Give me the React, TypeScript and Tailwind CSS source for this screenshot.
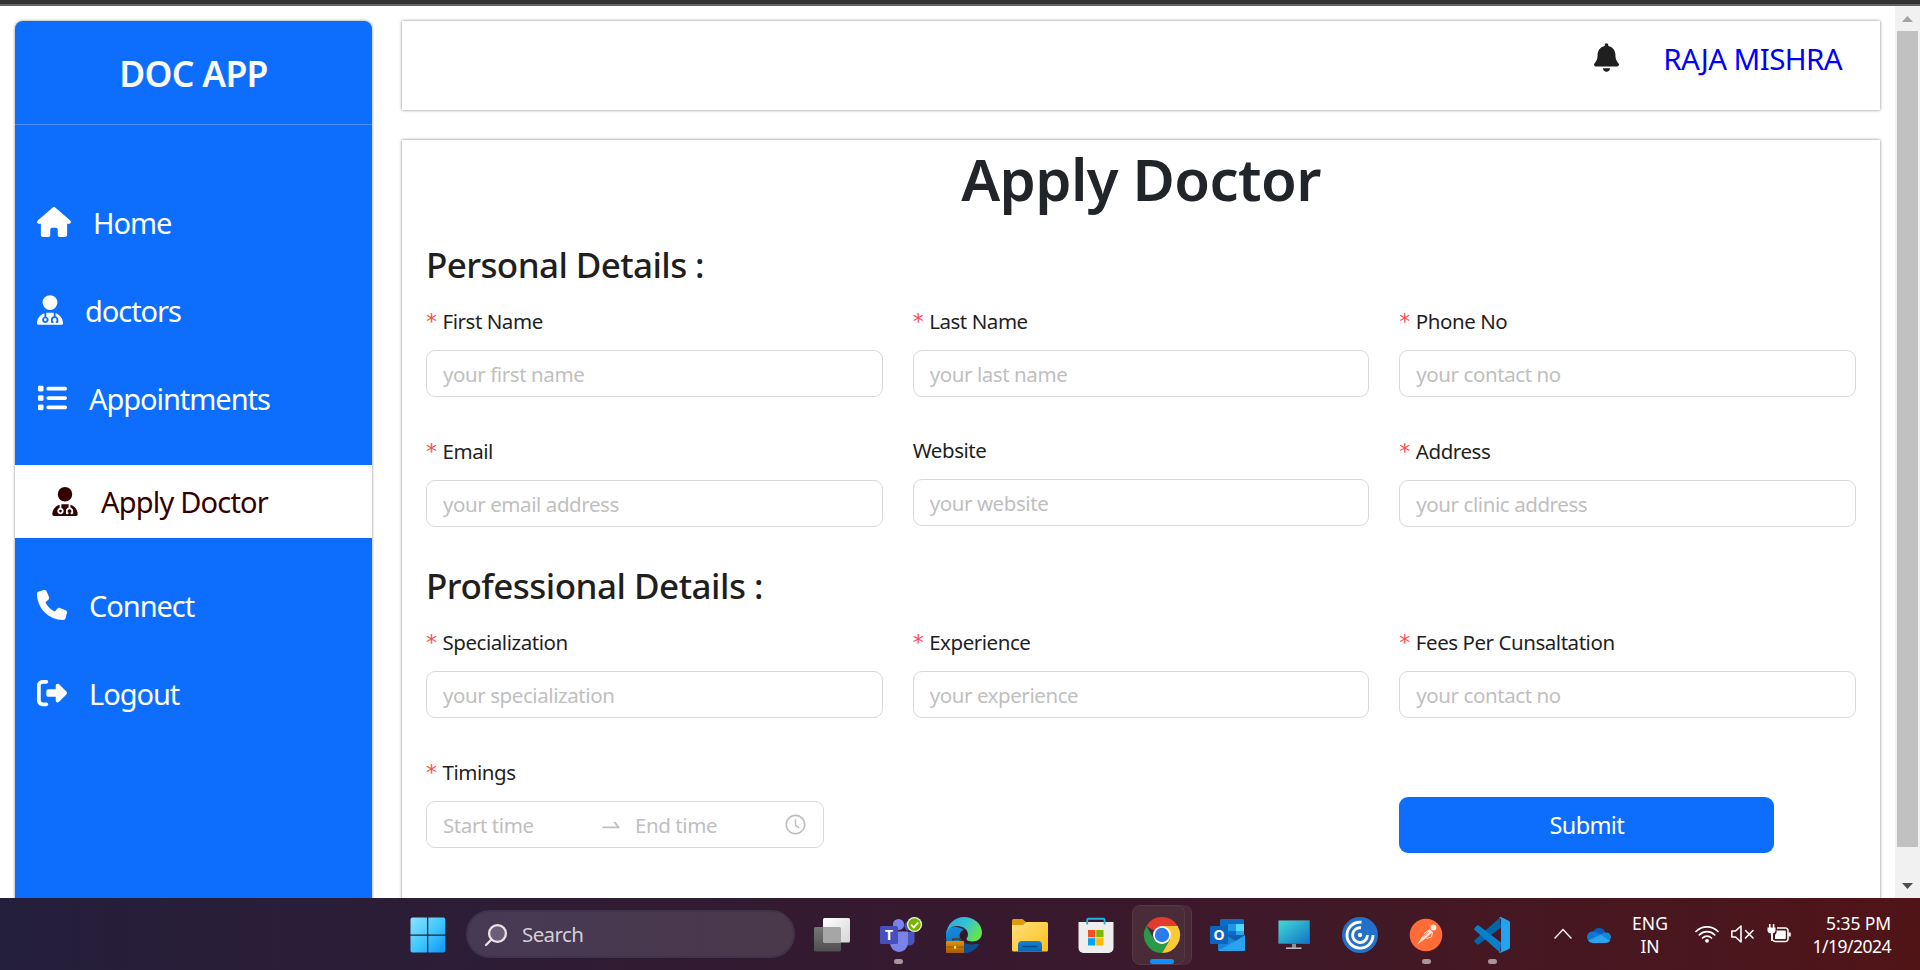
import React from "react";
import {
  FaBell,
  FaHouse,
  FaList,
  FaPhone,
  FaRightFromBracket,
  FaUserDoctor,
} from "react-icons/fa6";
import { AiOutlineClockCircle, AiOutlineSwapRight } from "react-icons/ai";

type FieldProps = { label: string; placeholder: string; required?: boolean };

function Label({ text, required = true }: { text: string; required?: boolean }) {
  return (
    <label className="flex h-[34px] items-center text-[20.5px] tracking-[-0.45px] whitespace-nowrap text-[#1f1f1f]">
      {required && (
        <span className="w-[16.5px] pt-[2px] font-['DejaVu_Sans'] text-[22px] leading-none tracking-normal text-[#ff4d4f]">
          *
        </span>
      )}
      {text}
    </label>
  );
}

function Field({ label, placeholder, required = true }: FieldProps) {
  return (
    <div className={required ? "flex flex-col gap-[12px]" : "-mt-px flex flex-col gap-[12px]"}>
      <Label text={label} required={required} />
      <input
        placeholder={placeholder}
        className="h-[47px] w-full rounded-[9px] border border-[#d9d9d9] bg-white px-[16px] text-[20.5px] tracking-[-0.42px] placeholder:text-[#bfbfbf]"
      />
    </div>
  );
}

function MenuItem({ icon, text }: { icon: React.ReactNode; text: string }) {
  return (
    <a className="flex h-[88px] items-center gap-[22px] pl-[22px] text-[29px] tracking-[-1.05px] whitespace-nowrap text-white">
      {icon}
      <span className="pt-px">{text}</span>
    </a>
  );
}

function Slot({ children, running = false }: { children: React.ReactNode; running?: boolean }) {
  return (
    <div className="relative flex h-full w-[66px] shrink-0 items-center justify-center pt-px">
      {children}
      {running && (
        <span className="absolute bottom-[6px] left-[29px] h-[5px] w-[9px] rounded-full bg-[#a8959d]" />
      )}
    </div>
  );
}

const ICON = "h-[36px] w-[36px] shrink-0 overflow-visible";

function StartIcon() {
  return (
    <svg viewBox="0 0 36 36" className={ICON}>
      <defs>
        <linearGradient id="start" x1="0" y1="0" x2="36" y2="36" gradientUnits="userSpaceOnUse">
          <stop offset="0" stopColor="#8fe3ff" />
          <stop offset="0.5" stopColor="#43c8fd" />
          <stop offset="1" stopColor="#0a92f7" />
        </linearGradient>
      </defs>
      <g fill="url(#start)">
        <path d="M2.5 .5H17v17H.5V2.5a2 2 0 0 1 2-2z" />
        <path d="M18.3 .5h15a2 2 0 0 1 2 2v15h-17z" />
        <path d="M.5 18.8H17v16.7H2.5a2 2 0 0 1-2-2z" />
        <path d="M18.3 18.8h17v14.7a2 2 0 0 1-2 2h-15z" />
      </g>
    </svg>
  );
}

function TaskViewIcon() {
  return (
    <svg viewBox="0 0 36 36" className={ICON}>
      <defs>
        <linearGradient id="tvw" x1="0" y1="0" x2="1" y2="1">
          <stop offset="0" stopColor="#ffffff" />
          <stop offset="1" stopColor="#d5d5d5" />
        </linearGradient>
        <linearGradient id="tvg" x1="0" y1="0" x2="0" y2="1">
          <stop offset="0" stopColor="#767676" />
          <stop offset="1" stopColor="#505050" />
        </linearGradient>
      </defs>
      <rect x="0" y="10" width="27" height="24.5" rx="1.5" fill="url(#tvg)" />
      <rect x="9" y="1" width="27" height="24.5" rx="1.5" fill="url(#tvw)" />
      <path d="M9 10h16.5a1.5 1.5 0 0 1 1.5 1.5V25.5H10.5a1.5 1.5 0 0 1-1.5-1.5z" fill="#a6a6a6" />
    </svg>
  );
}

function TeamsIcon() {
  return (
    <svg viewBox="0 0 42 36" className="h-[36px] w-[42px] shrink-0 overflow-visible">
      <circle cx="29" cy="9" r="4.5" fill="#4b53bc" />
      <path d="M25 15h9.5v9.5a5 5 0 0 1-9.5 1z" fill="#4b53bc" />
      <circle cx="18.5" cy="7.5" r="5.6" fill="#7b83eb" />
      <path d="M10 14.5h18v11.5a9 9 0 0 1-18 0z" fill="#7b83eb" />
      <rect x="0" y="9" width="18" height="18" rx="1.5" fill="#4550bd" />
      <text x="9" y="23" textAnchor="middle" fontSize="14" fontWeight="700" fill="#fff" fontFamily="Noto Sans, sans-serif">
        T
      </text>
      <circle cx="34.5" cy="7.5" r="7.6" fill="#f3f8e8" />
      <circle cx="34.5" cy="7.5" r="6.3" fill="#77b300" />
      <path d="M31 7.7l2.7 2.7 4.6-5" fill="none" stroke="#fff" strokeWidth="1.8" />
    </svg>
  );
}

function EdgeIcon() {
  return (
    <svg viewBox="0 0 36 36" className={ICON}>
      <defs>
        <linearGradient id="edgeTop" x1="0" y1="0" x2="1" y2="0.5">
          <stop offset="0" stopColor="#2aa7dc" />
          <stop offset="0.55" stopColor="#35c1d6" />
          <stop offset="1" stopColor="#66e250" />
        </linearGradient>
        <linearGradient id="edgeMid" x1="0" y1="0" x2="0.5" y2="1">
          <stop offset="0" stopColor="#1593df" />
          <stop offset="1" stopColor="#0b62b5" />
        </linearGradient>
        <linearGradient id="bag" x1="0" y1="0" x2="0" y2="1">
          <stop offset="0" stopColor="#e0920b" />
          <stop offset="1" stopColor="#a85b04" />
        </linearGradient>
      </defs>
      <path d="M0 16C3 9 12 8 18 13c-4 1-5 5-4 8 2 6 9 8 18 6-4 6-9 9-14 9C8 36 0 30 0 20z" fill="url(#edgeMid)" />
      <path d="M14 21c2 6 10 8.5 19.5 6-3.5 6-9.5 9-15.5 9-5-3-6-10-4-15z" fill="#0c4f91" />
      <path d="M14.500 17a4 4 0 0 1 7.500-1.500c.5 3.500-1.500 4-1.500 5.500 0 1 1 2 3 2.500-5 1-9-2-9-6.500z" fill="#2f1a2b" />
      <path d="M0 17C1 7 9 0 18 0c10 0 18 7 18 15.500 0 6-4.500 9-9.500 9-4 0-6-1.300-6-2.500 0-1 1.500-1.700 1.500-4.500C22 12.500 17 9 11 9 6 9 2 12 0 17z" fill="url(#edgeTop)" />
      <path d="M7 24v-2h8v2" fill="none" stroke="#5c3409" strokeWidth="1.5" />
      <rect x="0" y="24" width="18" height="12" rx="0.8" fill="url(#bag)" />
      <path d="M0 30h18" stroke="#8f4c05" strokeWidth="0.8" />
      <rect x="8" y="29" width="2.2" height="2.6" fill="#ffe27a" />
    </svg>
  );
}

function FolderIcon() {
  return (
    <svg viewBox="0 0 36 36" className={ICON}>
      <defs>
        <linearGradient id="folder" x1="0" y1="0" x2="1" y2="1">
          <stop offset="0" stopColor="#ffe07a" />
          <stop offset="1" stopColor="#fdbf1e" />
        </linearGradient>
        <linearGradient id="tray" x1="0" y1="0" x2="0" y2="1">
          <stop offset="0" stopColor="#1681d3" />
          <stop offset="1" stopColor="#0c65b5" />
        </linearGradient>
      </defs>
      <path d="M0 3.5a1.5 1.5 0 0 1 1.5-1.5H10.5l4 3.5v6H0z" fill="#e09b0d" />
      <path d="M0 8h11l3.5-3H34.5a1.5 1.5 0 0 1 1.5 1.5V33a1.5 1.5 0 0 1-1.5 1.5H1.5A1.5 1.5 0 0 1 0 33z" fill="url(#folder)" />
      <path d="M6 34.5V28a4 4 0 0 1 4-4H26a4 4 0 0 1 4 4v6.5z" fill="url(#tray)" />
      <path d="M11 29.5h14" stroke="#0b4a85" strokeWidth="1.5" strokeLinecap="round" />
    </svg>
  );
}

function StoreIcon() {
  return (
    <svg viewBox="0 0 36 36" className={ICON}>
      <path d="M.5 5h35V31a5 5 0 0 1-5 5h-25a5 5 0 0 1-5-5z" fill="#eeeeee" />
      <path d="M9.200 7.500V3A1.200 1.200 0 0 1 10.400 1.800h15A1.200 1.200 0 0 1 26.600 3v4.500" fill="none" stroke="#25b1e8" strokeWidth="1.900" />
      <rect x="10" y="13" width="7.3" height="7.3" fill="#f25022" />
      <rect x="18.2" y="13" width="7.3" height="7.3" fill="#7fba00" />
      <rect x="10" y="21.2" width="7.3" height="7.3" fill="#00a4ef" />
      <rect x="18.2" y="21.2" width="7.3" height="7.3" fill="#ffb900" />
    </svg>
  );
}

function ChromeIcon() {
  return (
    <svg viewBox="0 0 36 36" className={ICON}>
      <path d="M18 18 2.400 9A18 18 0 0 1 33.600 9z" fill="#e33b2e" />
      <path d="M18 9h15.600A18 18 0 0 1 18 36l7.800-13.500z" fill="#fcc934" />
      <path d="M10.200 22.500 2.400 9A18 18 0 0 0 18 36l7.800-13.500z" fill="#2a9a48" />
      <circle cx="18" cy="18" r="9" fill="#fff" />
      <circle cx="18" cy="18" r="7.2" fill="#2a7cec" />
    </svg>
  );
}

function OutlookIcon() {
  return (
    <svg viewBox="0 0 36 36" className={ICON}>
      <path d="M10 3.500A1.500 1.500 0 0 1 11.500 2h21A1.500 1.500 0 0 1 34 3.500V21H10z" fill="#0f6cc4" />
      <path d="M18 7h8v7h-8z" fill="#1f97e6" />
      <path d="M26 7h8v7h-8z" fill="#50d9ff" />
      <path d="M26 14h8v7h-8z" fill="#28a8ea" />
      <path d="M8 18h27V32.500a1.500 1.500 0 0 1-1.500 1.500h-24A1.500 1.500 0 0 1 8 32.500z" fill="#1784d9" />
      <path d="M35 18.500 8.500 33.500q.5.500 1 .5h24a1.500 1.500 0 0 0 1.500-1.500z" fill="#2ba3ec" />
      <path d="M16 18h19l-9.500 6z" fill="#0f5fb0" />
      <rect x="0" y="9" width="18" height="18" rx="1.5" fill="#0c64bd" />
      <text x="9" y="23" textAnchor="middle" fontSize="14" fontWeight="700" fill="#fff" fontFamily="Noto Sans, sans-serif">
        O
      </text>
    </svg>
  );
}

function MonitorIcon() {
  return (
    <svg viewBox="0 0 36 36" className={ICON}>
      <defs>
        <linearGradient id="screen" x1="0" y1="0" x2="1" y2="1">
          <stop offset="0" stopColor="#3fdbd8" />
          <stop offset="1" stopColor="#1273c4" />
        </linearGradient>
      </defs>
      <rect x="2" y="3" width="32" height="24" rx="1" fill="#55606a" />
      <rect x="2.8" y="3.8" width="30.4" height="22.4" fill="url(#screen)" />
      <path d="M16 27h4v4h-4z" fill="#8b949b" />
      <path d="M10 31.200h15.500" stroke="#b3babf" strokeWidth="1.6" />
    </svg>
  );
}

function WorkspaceIcon() {
  return (
    <svg viewBox="0 0 36 36" className={ICON}>
      <circle cx="18" cy="18" r="18" fill="#2270c9" />
      <g fill="none" stroke="#fff" strokeWidth="2.900">
        <path d="M19.500 5.200A13 13 0 1 0 31 18" />
        <path d="M19 10.800A7.400 7.400 0 1 0 25.400 18" />
      </g>
      <circle cx="18" cy="18" r="2.2" fill="#fff" />
    </svg>
  );
}

function PostmanIcon() {
  return (
    <svg viewBox="0 0 36 36" className={ICON}>
      <circle cx="18" cy="18" r="16.3" fill="#ff6c37" />
      <circle cx="25.500" cy="10.500" r="2.900" fill="#ffe9e0" />
      <path d="M22 12.500l2.500 2.700-7.500 6.500-8 6 5-7.500z" fill="#ffe9e0" />
      <path d="M16 16.500l6-4M18.500 21.500l5-1.500 1-5" stroke="#ffe9e0" strokeWidth="1" fill="none" />
      <path d="M15 20.500l6-5.500" stroke="#ff6c37" strokeWidth="0.700" />
    </svg>
  );
}

function CodeIcon() {
  return (
    <svg viewBox="0 0 36 36" className={ICON}>
      <path d="M27 10.500 5 27.300a1.600 1.600 0 0 1-2 0L.7 25.200a1.500 1.500 0 0 1 0-2.300L26 .5z" fill="#0065a9" />
      <path d="M27 25.500 5 8.700a1.600 1.600 0 0 0-2 0L.7 10.800a1.500 1.500 0 0 0 0 2.300L26 35.500z" fill="#0a80cc" />
      <path d="M26.600 35.800A2.300 2.300 0 0 1 25 35.500L27 34V2l-2-1.500a2.300 2.300 0 0 1 2.500-.2l7.200 3.500a2.300 2.300 0 0 1 1.300 2v24.400a2.300 2.300 0 0 1-1.300 2z" fill="#24a4ee" />
    </svg>
  );
}

function CloudIcon() {
  return (
    <svg viewBox="0 0 24 17" className="ml-[15px] h-[17px] w-[24px] shrink-0">
      <path d="M6 6a6.700 6.700 0 0 1 12.500.5L14 12z" fill="#0a5cb8" />
      <path d="M5.500 5.500C2.500 5.500 0 8 0 11a5 5 0 0 0 1.500 3.800L15 8.500 9.500 6.200a7 7 0 0 0-4-.7z" fill="#0f76d2" />
      <path d="M19 6.500c-2 0-3.500.8-5 2l8.500 5.500A5 5 0 0 0 24 11c0-2.600-2-4.500-5-4.500z" fill="#1588dc" />
      <path d="M14 8.500 1 14.500A5.500 5.500 0 0 0 5.500 17H19a5 5 0 0 0 4.300-2.500z" fill="#2aa4ee" />
    </svg>
  );
}

function WifiIcon() {
  return (
    <svg viewBox="0 0 24 18" className="ml-[26px] h-[18px] w-[24px] shrink-0" fill="none" stroke="#fff" strokeWidth="1.700" strokeLinecap="round">
      <path d="M1 6.500a15.500 15.500 0 0 1 22 0" />
      <path d="M4.300 9.800a11 11 0 0 1 15.400 0" />
      <path d="M7.500 13a6.300 6.300 0 0 1 9 0" />
      <circle cx="12" cy="15.800" r="1.900" fill="#fff" stroke="none" />
    </svg>
  );
}

function MuteIcon() {
  return (
    <svg viewBox="0 0 23 18" className="ml-[12px] h-[18px] w-[23px] shrink-0" fill="none" stroke="#fff" strokeWidth="1.600" strokeLinejoin="round" strokeLinecap="round">
      <path d="M.8 6h3.700L10 1v16l-5.500-5H.8z" />
      <path d="M14.500 5.500l7.500 7.500M22 5.500l-7.500 7.500" />
    </svg>
  );
}

function BatteryIcon() {
  return (
    <svg viewBox="0 0 25 20" className="ml-[13px] h-[20px] w-[25px] shrink-0" fill="none" stroke="#fff" strokeWidth="1.600">
      <path d="M10 4h8.500a2.500 2.500 0 0 1 2.500 2.500V15a2.500 2.500 0 0 1-2.500 2.500H8.500A2.500 2.500 0 0 1 6 16" />
      <path d="M22.500 8.500v4" strokeWidth="2.500" />
      <path d="M9.500 6.500H18a.8.800 0 0 1 .8.800v7a.8.800 0 0 1-.8.800H8V11l1.500-2z" fill="#fff" stroke="none" />
      <path d="M.5 3.500h8v3A3 3 0 0 1 6 9.300V17H4V9.300A3 3 0 0 1 .5 6.500z" fill="#fff" stroke="none" />
      <path d="M2.800 0v4M6.600 0v4" strokeWidth="1.600" />
    </svg>
  );
}

export default function App() {
  return (
    <div className="flex h-[970px] w-[1920px] flex-col overflow-hidden bg-white font-['Noto_Sans',sans-serif]">
      <div className="h-[6px] shrink-0 border-b-2 border-[#636363] bg-[#333333]" />

      <div className="flex h-[892px] shrink-0 overflow-hidden">
        <div className="flex grow gap-[30px] overflow-hidden pt-[15px] pr-[15px] pl-[15px]">
          <aside className="h-[920px] w-[357px] shrink-0 rounded-[8px] bg-[#0d6efd] shadow-[0_0_3px_gray]">
            <div className="flex h-[104px] items-center justify-center border-b border-[#4a90f5] pt-[2px]">
              <h1 className="text-[35.5px] font-semibold tracking-[-0.7px] text-[#f8f9fa]">DOC APP</h1>
            </div>
            <nav className="flex flex-col pt-[53px]">
              <MenuItem icon={<FaHouse className="h-[30px] w-[34px]" />} text="Home" />
              <MenuItem icon={<FaUserDoctor className="h-[30px] w-[26px]" />} text="doctors" />
              <MenuItem icon={<FaList className="h-[30px] w-[30px]" />} text="Appointments" />
              <a className="my-[23px] flex h-[73px] items-center gap-[23px] bg-white pl-[37px] text-[29px] tracking-[-0.8px] whitespace-nowrap text-[#330000]">
                <FaUserDoctor className="h-[29px] w-[26px]" />
                <span>Apply Doctor</span>
              </a>
              <MenuItem icon={<FaPhone className="h-[30px] w-[30px]" />} text="Connect" />
              <MenuItem icon={<FaRightFromBracket className="h-[30px] w-[30px]" />} text="Logout" />
            </nav>
          </aside>

          <main className="flex w-[1478px] shrink-0 flex-col gap-[30px]">
            <header className="flex h-[89px] shrink-0 justify-end gap-[44px] bg-white pr-[38px] shadow-[0_0_3px_gray]">
              <FaBell className="mt-[22px] h-[29px] w-[25px] text-[#1f1f1f]" />
              <a className="mt-[18px] text-[29.5px] leading-[40px] tracking-[-0.6px] whitespace-nowrap text-[#0000ff]">
                RAJA MISHRA
              </a>
            </header>

            <section className="h-[800px] shrink-0 bg-white px-[24px] pt-[3px] shadow-[0_0_3px_gray]">
              <h1 className="text-center text-[58px] leading-[72px] font-semibold tracking-[-0.6px] text-[#212529]">
                Apply Doctor
              </h1>
              <h4 className="mt-[28px] mb-[17px] text-[35px] leading-[44px] font-medium tracking-[-0.6px] text-[#1f1f1f]">
                Personal Details :
              </h4>
              <div className="grid grid-cols-3 gap-x-[30px] gap-y-[37px]">
                <Field label="First Name" placeholder="your first name" />
                <Field label="Last Name" placeholder="your last name" />
                <Field label="Phone No" placeholder="your contact no" />
                <Field label="Email" placeholder="your email address" />
                <Field label="Website" placeholder="your website" required={false} />
                <Field label="Address" placeholder="your clinic address" />
              </div>
              <h4 className="mt-[37px] mb-[17px] text-[35px] leading-[44px] font-medium tracking-[-0.52px] text-[#1f1f1f]">
                Professional Details :
              </h4>
              <div className="grid grid-cols-3 gap-x-[30px] gap-y-[37px]">
                <Field label="Specialization" placeholder="your specialization" />
                <Field label="Experience" placeholder="your experience" />
                <Field label="Fees Per Cunsaltation" placeholder="your contact no" />
                <div className="flex flex-col gap-[12px]">
                  <Label text="Timings" />
                  <div className="flex h-[47px] w-[398px] items-center rounded-[9px] border border-[#d9d9d9] px-[16px] text-[20.5px] tracking-[-0.42px] text-[#bfbfbf]">
                    <span className="w-[156px] pt-px">Start time</span>
                    <AiOutlineSwapRight className="h-[24px] w-[24px]" />
                    <span className="ml-[12px] pt-px">End time</span>
                    <AiOutlineClockCircle className="ml-auto h-[23px] w-[23px]" />
                  </div>
                </div>
                <div />
                <div className="pt-[42px]">
                  <button className="h-[56px] w-[375px] rounded-[9px] bg-[#0d6efd] pt-[2px] text-[23.5px] tracking-[-0.6px] text-white">
                    Submit
                  </button>
                </div>
              </div>
            </section>
          </main>
        </div>

        <div className="flex w-[25px] shrink-0 flex-col items-center bg-[#f1f1f1]">
          <svg viewBox="0 0 25 25" className="h-[25px] w-[25px]">
            <path d="M7 16 12.500 10 18 16z" fill="#a3a3a3" />
          </svg>
          <div className="h-[816px] w-[21px] bg-[#c1c1c1]" />
          <svg viewBox="0 0 25 25" className="mt-[25px] h-[25px] w-[25px]">
            <path d="M7 11 12.500 17 18 11z" fill="#505050" />
          </svg>
        </div>
      </div>

      <footer className="flex h-[72px] shrink-0 items-center bg-linear-to-r from-[#241f3b] via-[#36192f] to-[#501417] pl-[395px]">
        <Slot>
          <StartIcon />
        </Slot>
        <div className="ml-[5px] flex h-[48px] w-[329px] shrink-0 items-center rounded-full border-2 border-[#41334c] bg-linear-to-r from-[#463a54] to-[#4b384b] pt-px pl-[16px]">
          <svg viewBox="0 0 24 24" className="h-[24px] w-[24px]" fill="#6a5f76" stroke="#e8e5ea" strokeWidth="2.300" strokeLinecap="round">
            <circle cx="13.500" cy="10.500" r="8.400" />
            <path d="M7.500 16.500 2 22" />
          </svg>
          <span className="ml-[14px] text-[20.5px] tracking-[-0.6px] text-[#d3cfd6]">Search</span>
        </div>
        <div className="ml-[4px] flex h-full">
          <Slot>
            <TaskViewIcon />
          </Slot>
          <Slot running>
            <div className="pl-[6px]">
              <TeamsIcon />
            </div>
          </Slot>
          <Slot>
            <EdgeIcon />
          </Slot>
          <Slot>
            <FolderIcon />
          </Slot>
          <Slot>
            <StoreIcon />
          </Slot>
          <Slot>
            <span className="absolute top-[7px] left-[10px] h-[60px] w-[53px] rounded-[8px] border-r border-[#593744] bg-[#4a2936]" />
            <span className="absolute top-[7px] left-[3px] h-[60px] w-[53px] rounded-[8px] border border-[#593744] bg-[#4a2c39]" />
            <div className="relative">
              <ChromeIcon />
            </div>
            <span className="absolute bottom-[6px] left-[21px] h-[5px] w-[24px] rounded-full bg-[#0a91ff]" />
          </Slot>
          <Slot>
            <OutlookIcon />
          </Slot>
          <Slot>
            <MonitorIcon />
          </Slot>
          <Slot>
            <WorkspaceIcon />
          </Slot>
          <Slot running>
            <PostmanIcon />
          </Slot>
          <Slot running>
            <CodeIcon />
          </Slot>
        </div>
        <svg viewBox="0 0 18 12" className="ml-[29px] h-[12px] w-[18px] shrink-0" fill="none" stroke="#fff" strokeWidth="1.300">
          <path d="M.6 10.500 9 1.500l8.400 9" />
        </svg>
        <CloudIcon />
        <div className="ml-[20px] w-[38px] shrink-0 pt-[2px] text-center text-[17.500px] leading-[23px] text-white">
          ENG
          <br />
          IN
        </div>
        <WifiIcon />
        <MuteIcon />
        <BatteryIcon />
        <div className="mr-[29px] ml-auto pt-[2px] text-right text-[17.500px] leading-[23px] text-white">
          <div className="tracking-[-0.1px]">5:35 PM</div>
          <div className="tracking-[-0.5px]">1/19/2024</div>
        </div>
      </footer>
    </div>
  );
}
